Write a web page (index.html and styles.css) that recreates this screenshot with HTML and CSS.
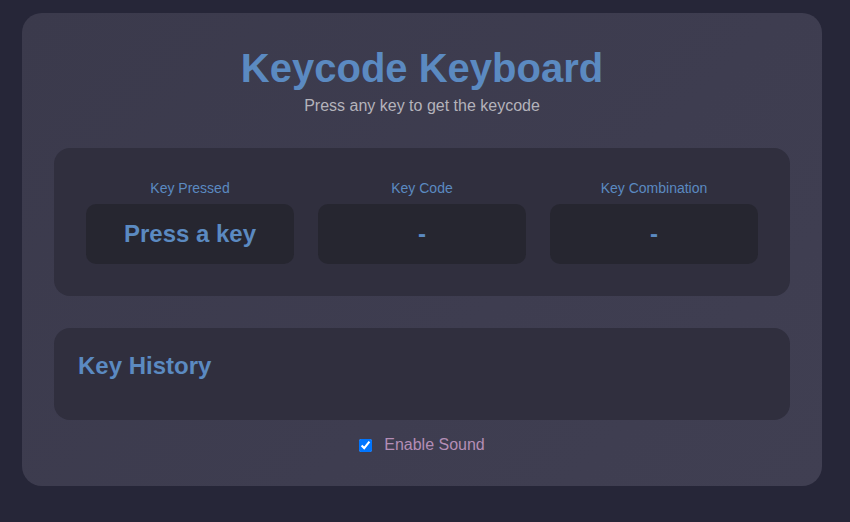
FILE: index.html
```html
<!DOCTYPE html>
<html lang="en">
<head>
<meta charset="utf-8">
<title>Keycode Keyboard</title>
<link rel="stylesheet" href="styles.css">
</head>
<body>
<main class="card">
  <header class="head">
    <h1 class="title">Keycode Keyboard</h1>
    <p class="subtitle">Press any key to get the keycode</p>
  </header>
  <section class="panel display">
    <div class="col">
      <div class="label">Key Pressed</div>
      <div class="box">Press a key</div>
    </div>
    <div class="col">
      <div class="label">Key Code</div>
      <div class="box">-</div>
    </div>
    <div class="col">
      <div class="label">Key Combination</div>
      <div class="box">-</div>
    </div>
  </section>
  <section class="panel history">
    <h2 class="history-title">Key History</h2>
    <ul class="history-list"></ul>
  </section>
  <label class="sound">
    <input type="checkbox" class="sound-check" checked>
    <span class="sound-text">Enable Sound</span>
  </label>
</main>
</body>
</html>
```
FILE: styles.css
```css
html, body {
  margin: 0;
  padding: 0;
}
body {
  background: #262638;
  font-family: "Liberation Sans", Arial, sans-serif;
  padding: 13px 28px 36px 22px;
  height: 522px;
  box-sizing: border-box;
}
.card {
  width: 800px;
  height: 473px;
  box-sizing: border-box;
  border-radius: 20px;
  background: linear-gradient(135deg, #3b3a4c 0%, #3e3d50 60%, #403f52 100%);
  padding: 32px 32px 0 32px;
  display: flex;
  flex-direction: column;
}
.head {
  text-align: center;
}
.title {
  margin: 0;
  font-size: 40px;
  line-height: 46px;
  font-weight: bold;
  color: #5b8ac1;
}
.subtitle {
  margin: 6px 0 0 0;
  font-size: 16px;
  line-height: 18px;
  color: #b4b3bb;
}
.panel {
  background: #302f3e;
  border-radius: 16px;
}
.display {
  margin-top: 33px;
  padding: 32px;
  display: grid;
  grid-template-columns: 1fr 1fr 1fr;
  gap: 24px;
}
.col {
  display: flex;
  flex-direction: column;
  align-items: stretch;
  text-align: center;
}
.label {
  font-size: 14px;
  line-height: 16px;
  color: #5b8ac1;
  margin-bottom: 8px;
}
.box {
  height: 60px;
  border-radius: 10px;
  background: #262630;
  color: #5b8ac1;
  font-size: 24px;
  font-weight: bold;
  display: flex;
  align-items: center;
  justify-content: center;
}
.history {
  margin-top: 32px;
  height: 92px;
  box-sizing: border-box;
  padding: 24px;
}
.history-title {
  margin: 0;
  font-size: 24px;
  line-height: 28px;
  font-weight: bold;
  color: #5b8ac1;
}
.history-list {
  margin: 0;
  padding: 0;
  list-style: none;
}
.sound {
  margin-top: 16px;
  display: flex;
  justify-content: center;
  align-items: center;
  gap: 12px;
  font-size: 16px;
  line-height: 18px;
  color: #b48db6;
}
.sound-check {
  margin: 0;
  width: 13px;
  height: 13px;
}
```
